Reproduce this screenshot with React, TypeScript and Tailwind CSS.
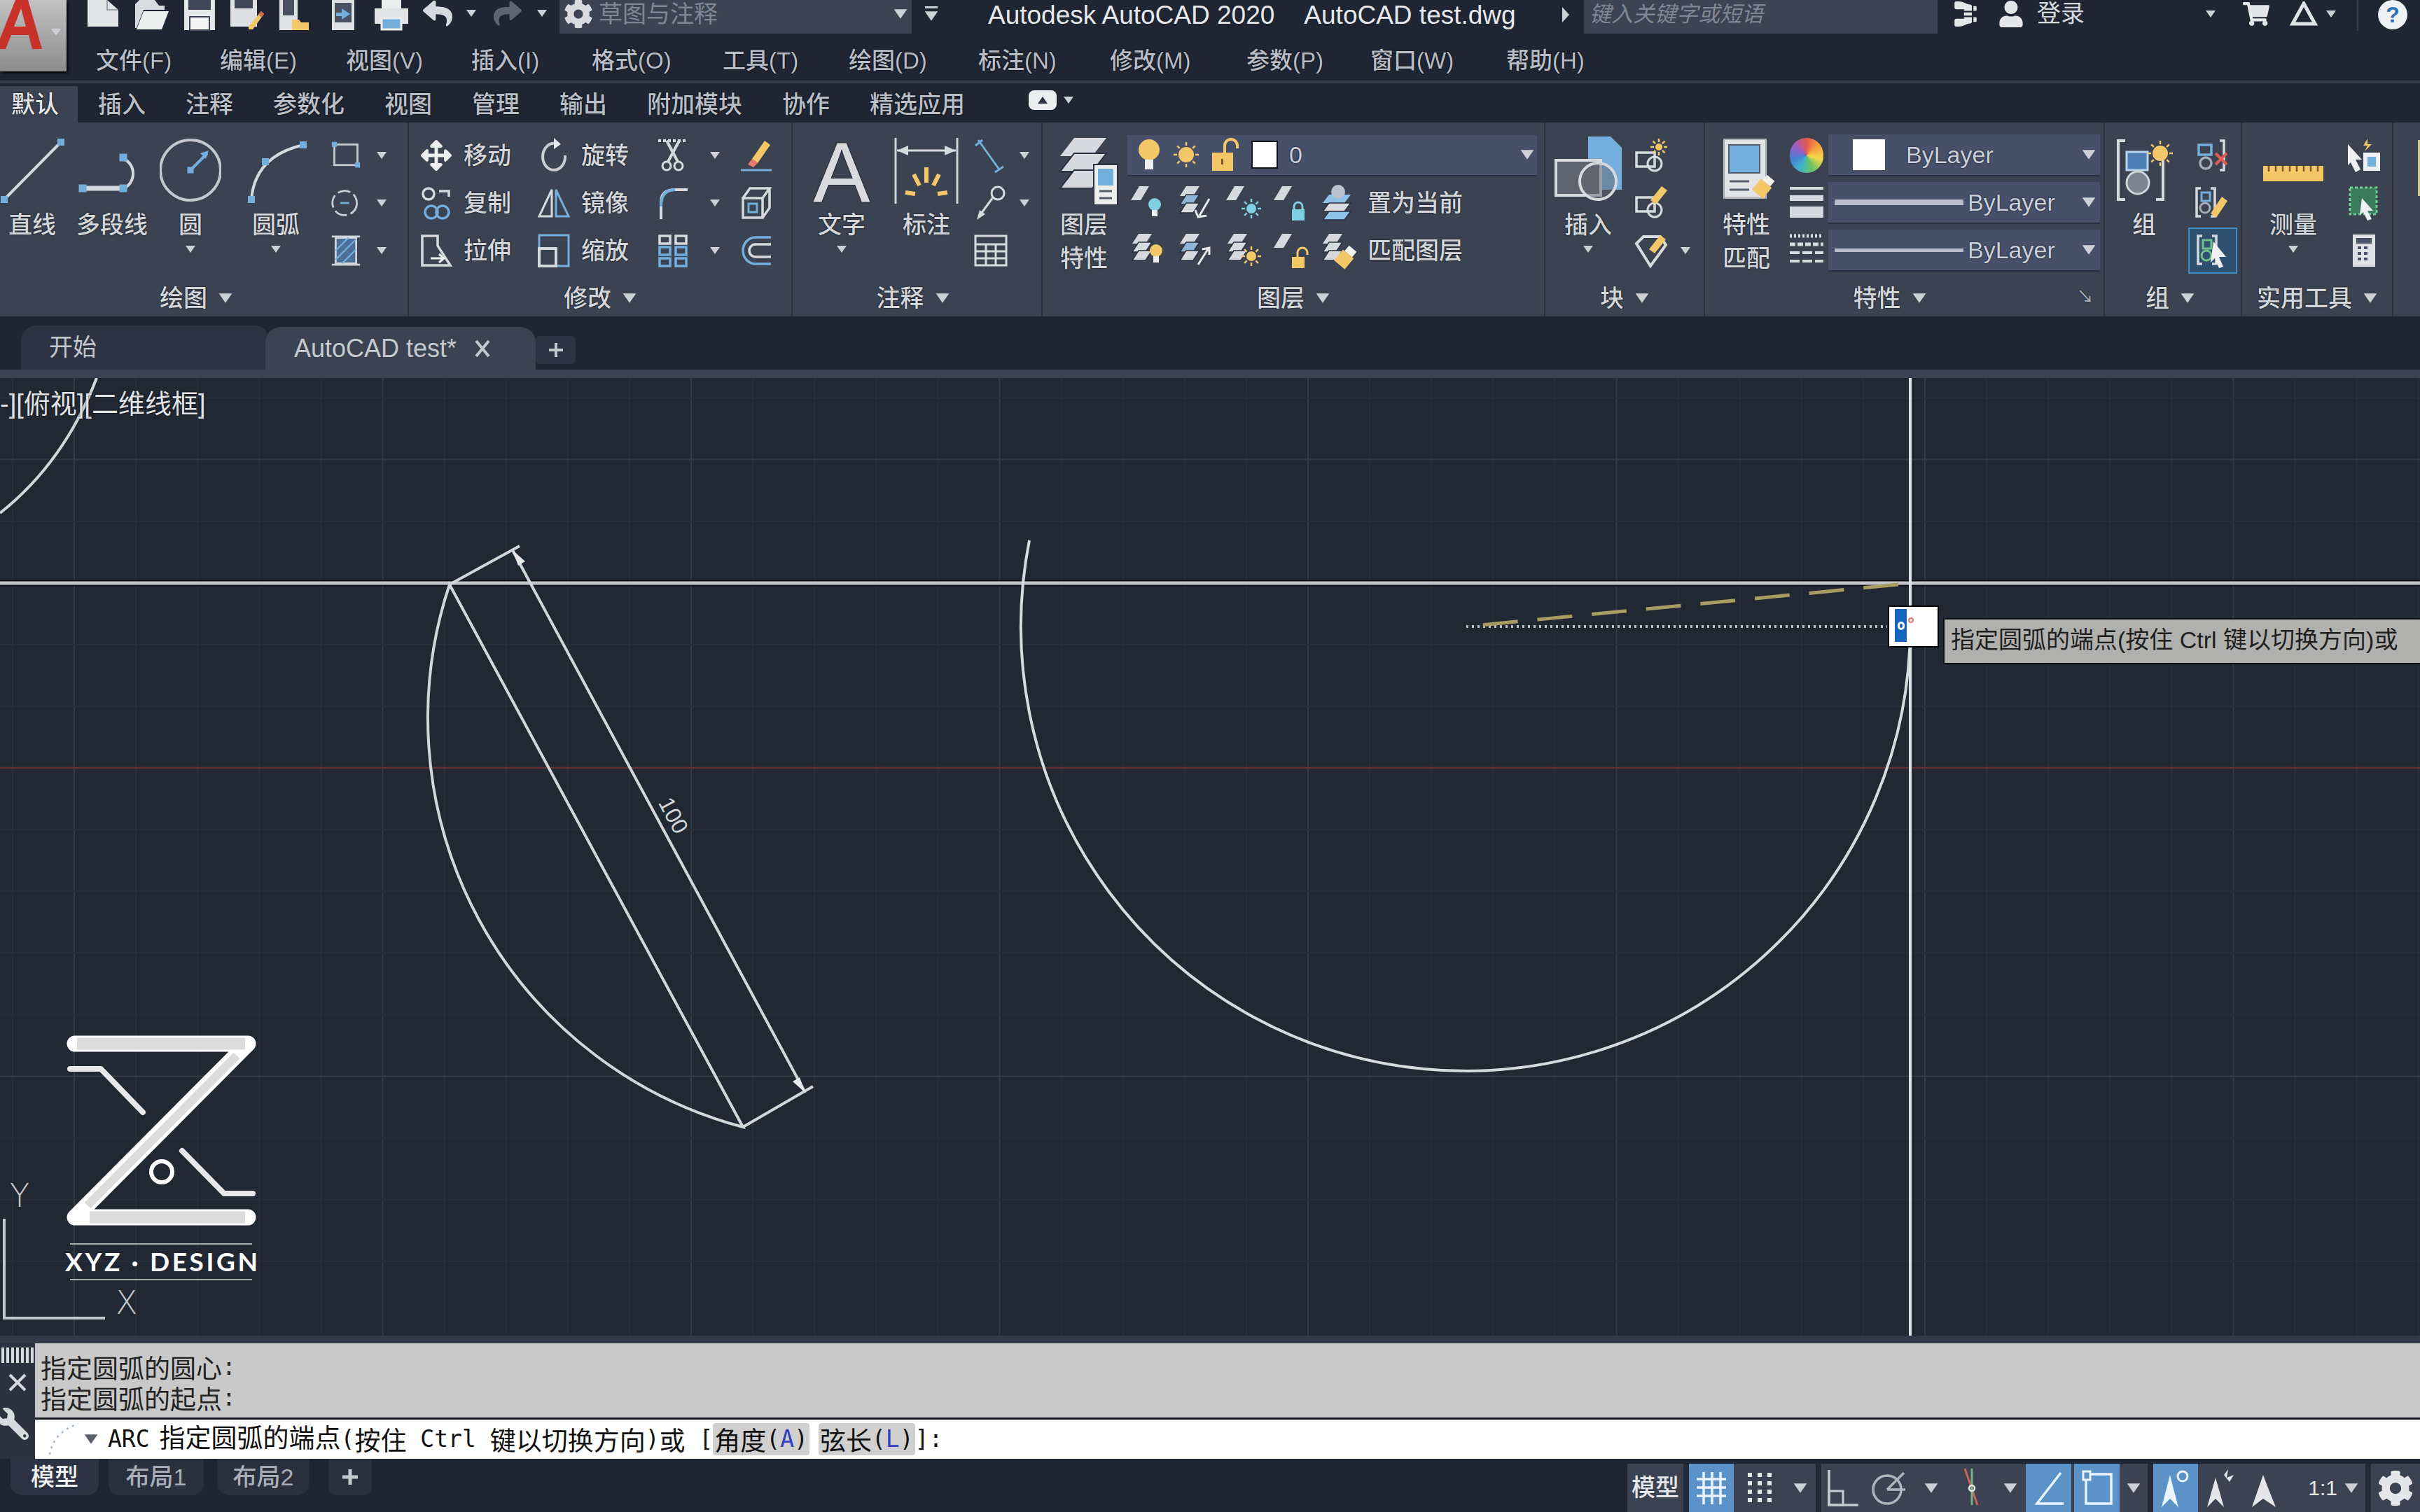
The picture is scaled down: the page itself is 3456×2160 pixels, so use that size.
import type { ReactNode } from "react"
import { FaArrowsAlt, FaBinoculars, FaCog, FaReply, FaShare, FaShoppingCart, FaUser, FaWrench } from "react-icons/fa"

const LIGHT = "#d6d9de"
const BLUE = "#74aedc"
const YELLOW = "#f4c768"
const TEAL = "#7fd0e0"

function Svg({ w, h, children, className }: { w: number; h: number; children: ReactNode; className?: string }) {
  return (
    <svg width={w} height={h} viewBox={`0 0 ${w} ${h}`} fill="none" className={className}>
      {children}
    </svg>
  )
}

function Caret({ big, className, fill = "#cdd1d7" }: { big?: boolean; className?: string; fill?: string }) {
  const w = big ? 20 : 14
  const h = big ? 16 : 12
  return (
    <svg width={w} height={h} viewBox="0 0 14 12" className={className}>
      <polygon points="0,1 14,1 7,11" fill={fill} />
    </svg>
  )
}

const Node = ({ x, y, s = 8 }: { x: number; y: number; s?: number }) => (
  <rect x={x - s / 2} y={y - s / 2} width={s} height={s} fill={BLUE} />
)

const Plane = ({ x = 0, y = 0, fill = LIGHT }: { x?: number; y?: number; fill?: string }) => (
  <polygon points={`${x + 2},${y + 24} ${x + 14},${y + 4} ${x + 28},${y + 4} ${x + 16},${y + 24}`} fill={fill} />
)

const Stack = ({ mid = LIGHT }: { mid?: string }) => (
  <>
    <polygon points="4,18 13,4 32,4 23,18" fill={LIGHT} />
    <polygon points="4,30 13,16 32,16 23,30" fill={mid} stroke="#2b3140" strokeWidth="1.5" />
    <polygon points="4,42 13,28 32,28 23,42" fill={LIGHT} stroke="#2b3140" strokeWidth="1.5" />
  </>
)

const Bulb = ({ c, x = 36, y = 30 }: { c: string; x?: number; y?: number }) => (
  <>
    <circle cx={x} cy={y} r="9" fill={c} />
    <rect x={x - 4} y={y + 8} width="8" height="9" fill="#eceef0" />
  </>
)

const Padlock = ({ c, open, x = 28, y = 28 }: { c: string; open?: boolean; x?: number; y?: number }) => (
  <>
    <path
      d={open ? `M${x + 8} ${y + 10} v-7 a7 7 0 0 1 14 0 v3` : `M${x + 3} ${y + 10} v-5 a6 6 0 0 1 12 0 v5`}
      stroke={c}
      strokeWidth="3"
    />
    <rect x={x} y={y + 9} width="18" height="16" fill={c} />
  </>
)

const Sun = ({ x, y, r = 8, c = YELLOW }: { x: number; y: number; r?: number; c?: string }) => (
  <>
    {[0, 45, 90, 135, 180, 225, 270, 315].map((a) => (
      <line
        key={a}
        x1={x}
        y1={y - r - 2}
        x2={x}
        y2={y - r - 7}
        stroke={c}
        strokeWidth="2.5"
        transform={`rotate(${a} ${x} ${y})`}
      />
    ))}
    <circle cx={x} cy={y} r={r} fill={c} />
  </>
)

const Brush = ({ x, y }: { x: number; y: number }) => (
  <g transform={`translate(${x} ${y}) rotate(40)`}>
    <rect x="-7" y="-14" width="14" height="10" fill="#f2f2ee" />
    <rect x="-10" y="-4" width="20" height="20" fill={YELLOW} />
  </g>
)

function Panel({
  className,
  title,
  footClass,
  corner,
  children,
}: {
  className: string
  title: string
  footClass?: string
  corner?: boolean
  children: ReactNode
}) {
  return (
    <div className={`flex flex-col border-r-2 border-[#2a303d] ${className}`}>
      <div className="flex h-[223px] pt-[13px]">{children}</div>
      <div className={`relative flex h-[54px] items-center justify-center gap-[16px] pt-[2px] text-[34px] text-[#d3d6db] ${footClass ?? ""}`}>
        <span className="leading-none">{title}</span>
        <Caret big />
        {corner && <span className="absolute right-[14px] top-[14px] text-[24px] leading-none text-[#aab0ba]">↘</span>}
      </div>
    </div>
  )
}

function Tool({
  icon,
  label,
  label2,
  caret,
  className,
}: {
  icon: ReactNode
  label: string
  label2?: string
  caret?: boolean
  className: string
}) {
  return (
    <div className={`flex flex-col items-center ${className}`}>
      <div className="flex h-[110px] w-full items-center justify-center">{icon}</div>
      <div className="h-[46px] text-[34px] leading-[46px] text-[#d3d6db]">{label}</div>
      {label2 && <div className="mt-[2px] text-[34px] leading-[46px] text-[#d3d6db]">{label2}</div>}
      {caret && <Caret className="mt-[6px]" />}
    </div>
  )
}

function Row({ children, className }: { children: ReactNode; className?: string }) {
  return <div className={`flex h-[68px] items-center ${className ?? ""}`}>{children}</div>
}

function Slot({ children, className }: { children?: ReactNode; className: string }) {
  return <div className={`flex shrink-0 items-center justify-center ${className}`}>{children}</div>
}

const menus = [
  { label: "文件(F)", w: "w-[177px]" },
  { label: "编辑(E)", w: "w-[180px]" },
  { label: "视图(V)", w: "w-[179px]" },
  { label: "插入(I)", w: "w-[172px]" },
  { label: "格式(O)", w: "w-[187px]" },
  { label: "工具(T)", w: "w-[180px]" },
  { label: "绘图(D)", w: "w-[185px]" },
  { label: "标注(N)", w: "w-[188px]" },
  { label: "修改(M)", w: "w-[195px]" },
  { label: "参数(P)", w: "w-[177px]" },
  { label: "窗口(W)", w: "w-[194px]" },
  { label: "帮助(H)", w: "w-[120px]" },
]
const ribbonTabs = ["插入", "注释", "参数化", "视图", "管理", "输出", "附加模块", "协作", "精选应用"]

function TitleBar() {
  return (
    <div className="flex h-[70px] items-start">
      <div className="w-[17px]" />
      <Slot className="h-[44px] w-[69px]">
        <Svg w={48} h={44}>
          <path d="M2 0 H30 L46 14 V38 H2 Z" fill="#e4e5e7" />
          <path d="M30 0 V14 H46" stroke="#9aa0aa" strokeWidth="2" />
        </Svg>
      </Slot>
      <Slot className="h-[44px] w-[69px]">
        <Svg w={50} h={44}>
          <path d="M8 0 H30 L36 8 H44 V14 H14 L4 40 H2 V6 Z" fill="#d9dbde" />
          <path d="M14 16 H50 L40 42 H4 Z" fill="#eceded" />
        </Svg>
      </Slot>
      <Slot className="h-[44px] w-[69px]">
        <Svg w={48} h={44}>
          <rect x="2" y="0" width="44" height="43" fill="#e6e7e9" />
          <rect x="8" y="0" width="32" height="14" fill="#3f4657" />
          <rect x="10" y="24" width="28" height="19" fill="#f5f5f5" stroke="#3f4657" strokeWidth="2" />
        </Svg>
      </Slot>
      <Slot className="h-[44px] w-[66px]">
        <Svg w={50} h={44}>
          <rect x="2" y="0" width="38" height="38" fill="#dfe0e3" />
          <rect x="8" y="0" width="26" height="12" fill="#3f4657" />
          <path d="M28 38 L46 16 L50 20 L34 42 H28 Z" fill={YELLOW} />
          <path d="M42 20 L46 16 L50 20 L46 25 Z" fill="#d86b50" />
        </Svg>
      </Slot>
      <Slot className="h-[44px] w-[70px]">
        <Svg w={46} h={44}>
          <rect x="2" y="0" width="26" height="43" fill="#dfe1e4" />
          <rect x="7" y="0" width="16" height="22" fill="#4a5162" />
          <path d="M20 28 H30 L33 32 H44 V43 H20 Z" fill={YELLOW} />
        </Svg>
      </Slot>
      <Slot className="h-[44px] w-[70px]">
        <Svg w={36} h={44}>
          <rect x="2" y="0" width="32" height="43" fill="#dfe1e4" />
          <rect x="6" y="4" width="24" height="28" fill="#4a5162" />
          <path d="M8 18 H16 V12 L28 20 L16 28 V23 H8 Z" fill={BLUE} />
        </Svg>
      </Slot>
      <Slot className="h-[44px] w-[67px]">
        <Svg w={52} h={44}>
          <rect x="12" y="0" width="28" height="12" fill="#eceded" />
          <rect x="2" y="12" width="48" height="22" fill="#e2e3e5" />
          <rect x="12" y="26" width="28" height="16" fill={BLUE} stroke="#eceded" strokeWidth="3" />
        </Svg>
      </Slot>
      <Slot className="h-[38px] w-[66px]">
        <FaReply size={42} color="#d6d9de" />
      </Slot>
      <Slot className="h-[38px] w-[30px]">
        <Caret />
      </Slot>
      <Slot className="h-[38px] w-[74px]">
        <FaShare size={40} color="#5d6472" />
      </Slot>
      <Slot className="h-[38px] w-[24px]">
        <Caret />
      </Slot>
      <div className="w-[13px]" />
      <div className="flex h-[48px] w-[503px] items-center bg-[#3c4353] pb-[8px] pl-[6px]">
        <FaCog size={42} color="#d8dade" />
        <span className="ml-[8px] text-[34px] leading-none text-[#7f8795]">草图与注释</span>
        <Caret big className="ml-auto mr-[6px]" />
      </div>
      <Slot className="h-[40px] w-[55px]">
        <div className="flex flex-col items-center gap-[3px]">
          <div className="h-[3px] w-[18px] bg-[#cdd1d7]" />
          <Caret big />
        </div>
      </Slot>
      <div className="flex h-[42px] w-[905px] items-center pl-[54px] text-[37px] leading-none text-[#e6e8eb]">
        <span>Autodesk AutoCAD 2020</span>
        <span className="ml-[42px]">AutoCAD test.dwg</span>
        <svg width="12" height="22" viewBox="0 0 12 22" className="ml-auto mr-[20px]">
          <polygon points="1,0 11,11 1,22" fill="#cdd1d7" />
        </svg>
      </div>
      <div className="flex h-[48px] w-[505px] items-center bg-[#3c4353] pb-[8px] pl-[8px]">
        <span className="text-[31px] italic leading-none text-[#7f8795]">键入关键字或短语</span>
      </div>
      <Slot className="ml-[22px] h-[40px] w-[36px]">
        <FaBinoculars size={38} color="#e4e6e9" className="rotate-90" />
      </Slot>
      <Slot className="ml-[25px] h-[40px] w-[44px]">
        <FaUser size={38} color="#e4e6e9" />
      </Slot>
      <span className="ml-[15px] text-[34px] leading-[38px] text-[#d6d9de]">登录</span>
      <Slot className="ml-[173px] h-[40px] w-[14px]">
        <Caret />
      </Slot>
      <Slot className="ml-[36px] h-[40px] w-[44px]">
        <FaShoppingCart size={38} color="#e4e6e9" />
      </Slot>
      <Slot className="ml-[24px] h-[40px] w-[44px]">
        <Svg w={44} h={36}>
          <path d="M22 3 L38 32 H6 Z" stroke="#dfe2e6" strokeWidth="5" />
        </Svg>
      </Slot>
      <Slot className="ml-[10px] h-[40px] w-[14px]">
        <Caret />
      </Slot>
      <div className="ml-[30px] h-[44px] w-[2px] bg-[#3c4353]" />
      <div className="ml-[28px] flex h-[42px] w-[42px] items-center justify-center rounded-full bg-[#eef0f3] text-[32px] font-bold leading-none text-[#2f6fb5]">
        ?
      </div>
    </div>
  )
}

function RibbonTabs() {
  return (
    <div className="flex h-[60px] items-end border-t-4 border-[#333948] text-[34px] font-medium text-[#b9bec8] [text-shadow:0_0_2px_#000]">
      <div className="flex h-[52px] w-[111px] items-center bg-[#3b4252] pl-[16px] text-[#e4e6ea]">默认</div>
      <div className="ml-[29px] flex h-[52px] items-center gap-[57px]">
        {ribbonTabs.map((t) => (
          <span key={t}>{t}</span>
        ))}
      </div>
      <div className="ml-[91px] flex h-[60px] items-center gap-[10px] pb-[4px]">
        <div className="flex h-[28px] w-[40px] items-center justify-center rounded-[8px] bg-[#eceef0]">
          <svg width="14" height="10" viewBox="0 0 14 10">
            <polygon points="7,0 14,10 0,10" fill="#2b3140" />
          </svg>
        </div>
        <Caret />
      </div>
    </div>
  )
}

function DrawPanel() {
  const rows = [
    <Svg w={48} h={44} key="r">
      <rect x="6" y="5" width="36" height="32" stroke="#c9cdd3" strokeWidth="3" />
      <Node x={6} y={5} />
      <Node x={42} y={37} />
    </Svg>,
    <Svg w={48} h={44} key="e">
      <ellipse cx="22" cy="22" rx="19" ry="19" stroke="#c9cdd3" strokeWidth="3" strokeDasharray="20 6" />
      <line x1="15" y1="22" x2="29" y2="22" stroke={BLUE} strokeWidth="3" />
    </Svg>,
    <Svg w={48} h={52} key="h">
      <rect x="8" y="6" width="32" height="40" fill="#4b6f96" stroke="#d0d3d8" strokeWidth="3" />
      <path d="M8 26 L28 6 M8 40 L40 8 M18 46 L40 24" stroke={BLUE} strokeWidth="2.5" />
      <path d="M2 4 H46 M2 48 H46" stroke="#d0d3d8" strokeWidth="3" />
    </Svg>,
  ]
  return (
    <Panel className="w-[584px]" title="绘图" footClass="pr-[22px]">
      <Tool
        className="w-[92px]"
        label="直线"
        icon={
          <Svg w={92} h={100}>
            <line x1="6" y1="92" x2="87" y2="10" stroke={LIGHT} strokeWidth="4" />
            <Node x={6} y={92} s={10} />
            <Node x={87} y={10} s={10} />
          </Svg>
        }
      />
      <Tool
        className="w-[136px]"
        label="多段线"
        icon={
          <Svg w={136} h={100}>
            <path d="M84 76 A20 22 0 0 0 84 34" stroke={LIGHT} strokeWidth="4" />
            <line x1="26" y1="76" x2="84" y2="76" stroke={LIGHT} strokeWidth="7" />
            <Node x={26} y={76} s={11} />
            <Node x={84} y={76} s={11} />
            <Node x={84} y={32} s={11} />
          </Svg>
        }
      />
      <Tool
        className="w-[88px]"
        label="圆"
        caret
        icon={
          <Svg w={88} h={100}>
            <circle cx="44" cy="50" r="43" stroke="#c4c8ce" strokeWidth="4" />
            <line x1="44" y1="50" x2="68" y2="26" stroke={BLUE} strokeWidth="4" />
            <Node x={44} y={50} s={9} />
            <polygon points="70,22 58,26 66,34" fill={BLUE} />
          </Svg>
        }
      />
      <Tool
        className="w-[156px]"
        label="圆弧"
        caret
        icon={
          <Svg w={156} h={100}>
            <path d="M43 92 Q48 30 117 14" stroke={LIGHT} strokeWidth="4" />
            <Node x={43} y={92} s={10} />
            <Node x={63} y={38} s={10} />
            <Node x={117} y={14} s={10} />
          </Svg>
        }
      />
      <div>
        {rows.map((r) => (
          <Row key={r.key}>
            <Slot className="w-[44px]">{r}</Slot>
            <Slot className="w-[58px]">
              <Caret />
            </Slot>
          </Row>
        ))}
      </div>
    </Panel>
  )
}

function ModifyPanel() {
  const rows: ReactNode[][] = [
    [
      <FaArrowsAlt size={44} color="#eceef0" key="a" />,
      "移动",
      <Svg w={44} h={50} key="b">
        <path d="M38 25 A16 19 0 1 1 24 8" stroke="#c9cdd3" strokeWidth="4" />
        <polygon points="22,0 32,9 22,16" fill="#e6e8eb" />
      </Svg>,
      "旋转",
      <Svg w={46} h={50} key="c">
        <path d="M2 4 H44" stroke={LIGHT} strokeWidth="4" strokeDasharray="4 3" />
        <path d="M14 4 L30 34 M32 4 L16 34" stroke={LIGHT} strokeWidth="4" />
        <circle cx="14" cy="40" r="6" stroke={LIGHT} strokeWidth="3" />
        <circle cx="31" cy="40" r="6" stroke={LIGHT} strokeWidth="3" />
      </Svg>,
      true,
      <Svg w={48} h={50} key="d">
        <path d="M18 30 L36 4 L44 10 L26 36 Z" fill={YELLOW} />
        <path d="M18 30 L26 36 L20 42 L12 38 Z" fill="#e77a6b" />
        <line x1="2" y1="46" x2="46" y2="46" stroke={BLUE} strokeWidth="3" />
      </Svg>,
    ],
    [
      <Svg w={48} h={50} key="a">
        <circle cx="13" cy="12" r="8" stroke={LIGHT} strokeWidth="3.5" />
        <path d="M28 8 H42 V16" stroke={LIGHT} strokeWidth="3.5" />
        <circle cx="17" cy="38" r="9" stroke={BLUE} strokeWidth="3.5" />
        <circle cx="33" cy="38" r="9" stroke={BLUE} strokeWidth="3.5" />
      </Svg>,
      "复制",
      <Svg w={46} h={50} key="b">
        <path d="M20 6 V44 H2 Z" stroke={LIGHT} strokeWidth="3" />
        <path d="M26 6 V44 H44 Z" stroke={BLUE} strokeWidth="3" />
      </Svg>,
      "镜像",
      <Svg w={46} h={50} key="c">
        <path d="M6 48 V24 Q6 6 26 6 H44" stroke={LIGHT} strokeWidth="4" />
        <path d="M6 30 Q6 6 26 6" stroke={BLUE} strokeWidth="4" />
      </Svg>,
      true,
      <Svg w={46} h={50} key="d">
        <path d="M4 18 H32 V46 H4 Z M4 18 L14 4 H42 L32 18 M42 4 V32 L32 46" stroke={LIGHT} strokeWidth="3.5" />
        <rect x="12" y="26" width="12" height="12" stroke={BLUE} strokeWidth="3" />
      </Svg>,
    ],
    [
      <Svg w={48} h={50} key="a">
        <path d="M4 4 H26 V18 L44 46 H4 Z" stroke={LIGHT} strokeWidth="3.5" />
        <path d="M16 36 H34 M28 30 L35 36 L28 42" stroke="#f0f1f3" strokeWidth="3" />
      </Svg>,
      "拉伸",
      <Svg w={48} h={50} key="b">
        <rect x="3" y="3" width="42" height="44" stroke={BLUE} strokeWidth="3" />
        <rect x="3" y="22" width="24" height="25" stroke={LIGHT} strokeWidth="4" />
      </Svg>,
      "缩放",
      <Svg w={46} h={50} key="c">
        {[4, 27].map((x) =>
          [4, 20, 36].map((y) => (
            <rect key={`${x}-${y}`} x={x} y={y} width="15" height="11" stroke={y === 4 ? LIGHT : BLUE} strokeWidth="3.5" />
          )),
        )}
      </Svg>,
      true,
      <Svg w={46} h={50} key="d">
        <path d="M44 6 H22 A18 19 0 0 0 22 44 H44" stroke={BLUE} strokeWidth="3.5" />
        <path d="M44 16 H22 A9 9 0 0 0 22 34 H44" stroke={LIGHT} strokeWidth="3.5" />
      </Svg>,
    ],
  ]
  return (
    <Panel className="w-[548px]" title="修改">
      <div className="pl-[15px]">
        {rows.map((r, i) => (
          <Row key={i}>
            <Slot className="w-[48px]">{r[0]}</Slot>
            <div className="w-[120px] pl-[15px] text-[34px] text-[#d3d6db]">{r[1]}</div>
            <Slot className="w-[48px]">{r[2]}</Slot>
            <div className="w-[122px] pl-[15px] text-[34px] text-[#d3d6db]">{r[3]}</div>
            <Slot className="w-[48px]">{r[4]}</Slot>
            <Slot className="w-[71px]">
              <Caret />
            </Slot>
            <Slot className="w-[48px]">{r[6]}</Slot>
          </Row>
        ))}
      </div>
    </Panel>
  )
}

function AnnotatePanel() {
  return (
    <Panel className="w-[357px]" title="注释" footClass="pr-[12px]">
      <Tool
        className="w-[140px]"
        label="文字"
        caret
        icon={
          <Svg w={84} h={100}>
            <text x="42" y="96" textAnchor="middle" fontSize="122" fill="#d8dadd" fontFamily="'Liberation Sans', sans-serif">
              A
            </text>
          </Svg>
        }
      />
      <Tool
        className="w-[102px]"
        label="标注"
        icon={
          <Svg w={100} h={100}>
            <path d="M6 4 V98 M94 4 V98" stroke="#d0d3d8" strokeWidth="3" />
            <path d="M8 22 H92" stroke="#d6d9de" strokeWidth="3" />
            <polygon points="8,22 24,15 24,29" fill="#d6d9de" />
            <polygon points="92,22 76,15 76,29" fill="#d6d9de" />
            <path d="M50 46 V68 M32 56 L40 72 M68 56 L60 72 M20 82 L34 84 M80 82 L66 84" stroke={YELLOW} strokeWidth="6" />
          </Svg>
        }
      />
      <div>
        <Row>
          <Slot className="w-[82px]">
            <Svg w={48} h={52}>
              <path d="M6 4 L36 46 M2 12 L12 4 M30 50 L42 42" stroke={BLUE} strokeWidth="3" />
            </Svg>
          </Slot>
          <Slot className="w-[14px]">
            <Caret />
          </Slot>
        </Row>
        <Row>
          <Slot className="w-[82px]">
            <Svg w={48} h={52}>
              <circle cx="34" cy="12" r="9" stroke={LIGHT} strokeWidth="3" />
              <path d="M27 18 L8 44" stroke={LIGHT} strokeWidth="3" />
              <polygon points="4,50 8,36 16,42" fill={LIGHT} />
            </Svg>
          </Slot>
          <Slot className="w-[14px]">
            <Caret />
          </Slot>
        </Row>
        <Row>
          <Slot className="w-[82px]">
            <Svg w={48} h={46}>
              <rect x="2" y="2" width="44" height="42" stroke={LIGHT} strokeWidth="3" />
              <path d="M2 14 H46 M2 24 H46 M2 34 H46 M17 14 V44 M31 14 V44" stroke={LIGHT} strokeWidth="3" />
            </Svg>
          </Slot>
        </Row>
      </div>
    </Panel>
  )
}

function LayerPanel() {
  const row1 = [
    <Svg w={56} h={56} key="1">
      <Plane />
      <Bulb c={TEAL} />
    </Svg>,
    <Svg w={56} h={56} key="2">
      <Stack mid="#8fb4d8" />
      <path d="M46 22 L32 46 M26 38 L30 48 L42 46" stroke="#e6e8eb" strokeWidth="3" />
    </Svg>,
    <Svg w={56} h={56} key="3">
      <Plane />
      <Sun x={38} y={36} c={TEAL} r={7} />
    </Svg>,
    <Svg w={56} h={56} key="4">
      <Plane />
      <Padlock c={TEAL} />
    </Svg>,
    <Svg w={56} h={56} key="5">
      <polygon points="4,28 13,16 44,16 35,28" fill="#8fc2e8" />
      <polygon points="4,40 13,28 44,28 35,40" fill="#d9dbde" stroke="#2b3140" strokeWidth="1.5" />
      <polygon points="4,52 13,40 44,40 35,52" fill="#8fc2e8" stroke="#2b3140" strokeWidth="1.5" />
      <circle cx="26" cy="12" r="10" fill="#b9c3d0" />
    </Svg>,
  ]
  const row2 = [
    <Svg w={56} h={56} key="1">
      <Stack />
      <Bulb c={YELLOW} x={38} y={28} />
    </Svg>,
    <Svg w={56} h={56} key="2">
      <Stack mid="#8fb4d8" />
      <path d="M30 48 L44 26 M36 26 L46 24 L46 34" stroke="#e6e8eb" strokeWidth="3" />
    </Svg>,
    <Svg w={56} h={56} key="3">
      <Stack />
      <Sun x={38} y={36} r={7} />
    </Svg>,
    <Svg w={56} h={56} key="4">
      <Plane />
      <Padlock c={YELLOW} open />
    </Svg>,
    <Svg w={56} h={56} key="5">
      <Stack />
      <Brush x={38} y={36} />
    </Svg>,
  ]
  return (
    <Panel className="w-[718px]" title="图层">
      <Tool
        className="w-[118px]"
        label="图层"
        label2="特性"
        icon={
          <Svg w={100} h={100}>
            <polygon points="16,30 36,4 82,4 62,30" fill={LIGHT} />
            <polygon points="16,52 36,26 82,26 62,52" fill={LIGHT} stroke="#2b3140" strokeWidth="2" />
            <polygon points="16,76 36,50 82,50 62,76" fill={LIGHT} stroke="#2b3140" strokeWidth="2" />
            <rect x="64" y="42" width="34" height="58" fill="#eceded" stroke="#2b3140" strokeWidth="2" />
            <rect x="70" y="48" width="22" height="24" fill={BLUE} />
            <path d="M72 80 H90 M72 90 H90" stroke="#555c6a" strokeWidth="3" />
          </Svg>
        }
      />
      <div className="ml-[3px] w-[585px]">
        <Row>
          <div className="flex h-[59px] w-full items-center border-b-2 border-[#2a303d] bg-[#465068] pl-[14px]">
            <Svg w={42} h={54}>
              <circle cx="17" cy="20" r="15" fill={YELLOW} />
              <rect x="11" y="34" width="12" height="14" fill="#eceef0" />
            </Svg>
            <Svg w={54} h={54} className="ml-[1px]">
              <Sun x={27} y={27} r={11} />
            </Svg>
            <Svg w={40} h={54} className="ml-[8px]">
              <path d="M20 24 V14 a9 9 0 0 1 18 0 v4" stroke={YELLOW} strokeWidth="4" />
              <rect x="2" y="24" width="30" height="26" fill={YELLOW} />
              <rect x="15" y="33" width="3" height="8" fill="#7a5a20" />
            </Svg>
            <div className="ml-[18px] h-[40px] w-[38px] border-2 border-[#11151c] bg-white" />
            <span className="ml-[16px] text-[34px] leading-none text-[#c9d0dc]">0</span>
            <Caret big className="ml-auto mr-[4px]" />
          </div>
        </Row>
        <Row className="gap-[12px] pl-[3px]">
          {row1}
          <span className="text-[34px] text-[#d3d6db]">置为当前</span>
        </Row>
        <Row className="gap-[12px] pl-[3px]">
          {row2}
          <span className="text-[34px] text-[#d3d6db]">匹配图层</span>
        </Row>
      </div>
    </Panel>
  )
}

function BlockPanel() {
  return (
    <Panel className="w-[228px]" title="块">
      <Tool
        className="w-[122px]"
        label="插入"
        caret
        icon={
          <Svg w={100} h={100}>
            <path d="M50 2 H82 L98 18 V78 H50 Z" fill={BLUE} />
            <rect x="4" y="36" width="64" height="50" fill="#5f6470" stroke={LIGHT} strokeWidth="4" />
            <circle cx="64" cy="66" r="26" stroke={LIGHT} strokeWidth="4" fill="#5f6470" fillOpacity="0.5" />
          </Svg>
        }
      />
      <div>
        <Row>
          <Slot className="w-[58px]">
            <Svg w={50} h={52}>
              <rect x="4" y="22" width="26" height="20" stroke={LIGHT} strokeWidth="3.5" />
              <circle cx="30" cy="38" r="10" stroke={LIGHT} strokeWidth="3" />
              <Sun x={36} y={14} r={5} />
            </Svg>
          </Slot>
        </Row>
        <Row>
          <Slot className="w-[58px]">
            <Svg w={50} h={52}>
              <rect x="4" y="18" width="26" height="20" stroke={LIGHT} strokeWidth="3.5" />
              <circle cx="30" cy="36" r="10" stroke={LIGHT} strokeWidth="3" />
              <path d="M24 22 L40 2 L48 8 L32 28 Z" fill={YELLOW} />
            </Svg>
          </Slot>
        </Row>
        <Row>
          <Slot className="w-[58px]">
            <Svg w={50} h={52}>
              <path d="M4 16 L14 6 H38 L46 18 L24 48 Z" stroke={LIGHT} strokeWidth="4" />
              <path d="M22 24 L38 4 L46 10 L30 30 Z" fill={YELLOW} />
            </Svg>
          </Slot>
          <Slot className="w-[40px]">
            <Caret />
          </Slot>
        </Row>
      </div>
    </Panel>
  )
}

function ComboLine({ thick }: { thick: number }) {
  return (
    <div className="flex h-[60px] w-full items-center border-b-2 border-[#2a303d] bg-[#465068] pl-[9px]">
      <div className="w-[184px] bg-[#b9c0cb]" style={{ height: thick }} />
      <span className="ml-[6px] text-[34px] leading-none text-[#c9d0dc]">ByLayer</span>
      <Caret big className="ml-auto mr-[6px]" />
    </div>
  )
}

function PropertiesPanel() {
  return (
    <Panel className="w-[571px]" title="特性" footClass="pr-[42px]" corner>
      <Tool
        className="w-[118px]"
        label="特性"
        label2="匹配"
        icon={
          <Svg w={100} h={100}>
            <rect x="18" y="6" width="60" height="84" fill="#e2e3e5" stroke="#aeb2b9" strokeWidth="2" />
            <rect x="25" y="14" width="44" height="40" fill={BLUE} stroke="#555c6a" strokeWidth="2" />
            <path d="M26 66 H54 M26 78 H54" stroke="#555c6a" strokeWidth="3" />
            <Brush x={76} y={72} />
          </Svg>
        }
      />
      <div className="w-[54px]">
        <Row>
          <Slot className="w-full">
            <div className="h-[50px] w-[48px] rounded-full bg-[conic-gradient(#e7584e,#f5a23c,#f5d84c,#6cc15f,#3fb4c9,#4a7fd0,#9a5cc6,#e7584e)]" />
          </Slot>
        </Row>
        <Row>
          <Slot className="w-full">
            <Svg w={48} h={50}>
              <rect y="2" width="48" height="4" fill={LIGHT} />
              <rect y="14" width="48" height="8" fill={LIGHT} />
              <rect y="30" width="48" height="16" fill={LIGHT} />
            </Svg>
          </Slot>
        </Row>
        <Row>
          <Slot className="w-full">
            <Svg w={48} h={50}>
              <path d="M0 4 H48" stroke={LIGHT} strokeWidth="5" strokeDasharray="3 3" />
              <path d="M0 16 H48" stroke={LIGHT} strokeWidth="5" strokeDasharray="8 3" />
              <path d="M0 28 H48" stroke={LIGHT} strokeWidth="4" strokeDasharray="14 4" />
              <path d="M0 40 H48" stroke={LIGHT} strokeWidth="4" strokeDasharray="14 4" />
            </Svg>
          </Slot>
        </Row>
      </div>
      <div className="ml-[4px] w-[388px]">
        <Row>
          <div className="flex h-[60px] w-full items-center border-b-2 border-[#2a303d] bg-[#465068] pl-[35px]">
            <div className="h-[44px] w-[46px] bg-white" />
            <span className="ml-[30px] text-[34px] leading-none text-[#c9d0dc]">ByLayer</span>
            <Caret big className="ml-auto mr-[6px]" />
          </div>
        </Row>
        <Row>
          <ComboLine thick={8} />
        </Row>
        <Row>
          <ComboLine thick={5} />
        </Row>
      </div>
    </Panel>
  )
}

function GroupPanel() {
  return (
    <Panel className="w-[196px]" title="组" footClass="pr-[8px]">
      <Tool
        className="w-[112px]"
        label="组"
        icon={
          <Svg w={90} h={100}>
            <path d="M18 8 H8 V92 H18 M62 92 H72 V20" stroke={LIGHT} strokeWidth="4" />
            <rect x="20" y="24" width="30" height="26" fill="#4d7fb5" stroke="#b9d4ec" strokeWidth="3" />
            <circle cx="36" cy="68" r="16" fill="#7d8290" stroke="#d0d3d8" strokeWidth="3" />
            <Sun x={68} y={26} r={11} />
          </Svg>
        }
      />
      <div className="w-[80px]">
        <Row>
          <Slot className="w-full">
            <Svg w={48} h={50}>
              <path d="M36 4 H42 V46 H36" stroke={LIGHT} strokeWidth="3.5" />
              <rect x="6" y="10" width="18" height="14" stroke={BLUE} strokeWidth="3.5" />
              <circle cx="16" cy="36" r="8" stroke="#a7acb5" strokeWidth="3.5" />
              <path d="M30 22 L46 38 M46 22 L30 38" stroke="#e05f54" strokeWidth="4" />
            </Svg>
          </Slot>
        </Row>
        <Row>
          <Slot className="w-full">
            <Svg w={50} h={54}>
              <path d="M10 6 H4 V46 H10 M24 46 H30 V6 H24" stroke={LIGHT} strokeWidth="3.5" />
              <rect x="11" y="12" width="12" height="12" stroke={BLUE} strokeWidth="3" />
              <circle cx="16" cy="34" r="7" stroke="#a7acb5" strokeWidth="3" />
              <path d="M24 42 L40 18 L48 24 L32 48 Z" fill={YELLOW} />
            </Svg>
          </Slot>
        </Row>
        <Row>
          <Slot className="ml-[7px] h-[66px] w-[70px] border-2 border-[#3f8fc2] bg-[#2f506e]">
            <Svg w={50} h={54}>
              <path d="M10 6 H4 V46 H10 M24 46 H30 V6 H24" stroke={LIGHT} strokeWidth="3.5" />
              <rect x="11" y="12" width="12" height="12" stroke="#6fbf8a" strokeWidth="3" />
              <circle cx="16" cy="34" r="7" stroke="#6fbf8a" strokeWidth="3" />
              <path d="M26 14 L44 36 L34 36 L40 50 L34 52 L28 38 L22 44 Z" fill="#eef0f3" />
            </Svg>
          </Slot>
        </Row>
      </div>
    </Panel>
  )
}

function UtilityPanel() {
  return (
    <Panel className="w-[216px]" title="实用工具">
      <Tool
        className="w-[146px]"
        label="测量"
        caret
        icon={
          <Svg w={90} h={100}>
            <rect x="2" y="44" width="86" height="22" fill={YELLOW} />
            <path d="M10 44 V52 M20 44 V52 M30 44 V52 M40 44 V52 M50 44 V52 M60 44 V52 M70 44 V52 M80 44 V52" stroke="#7a5a20" strokeWidth="2.5" />
          </Svg>
        }
      />
      <div className="w-[56px]">
        <Row>
          <Slot className="w-full">
            <Svg w={50} h={52}>
              <path d="M2 10 L22 32 L13 32 L20 46 L13 50 L6 36 L2 40 Z" fill="#eef0f3" />
              <rect x="24" y="22" width="24" height="26" fill="#eef0f3" />
              <rect x="30" y="28" width="12" height="14" fill={BLUE} />
              <path d="M30 2 L24 12 H30 L26 20 L36 10 H30 Z" fill={YELLOW} />
            </Svg>
          </Slot>
        </Row>
        <Row>
          <Slot className="w-full">
            <Svg w={46} h={50}>
              <rect x="3" y="3" width="38" height="38" fill="#3c7a5e" stroke="#6fd08f" strokeWidth="3" strokeDasharray="4 3" />
              <path d="M20 18 L36 36 L28 36 L34 48 L28 50 L22 38 L17 42 Z" fill="#eef0f3" />
            </Svg>
          </Slot>
        </Row>
        <Row>
          <Slot className="w-full">
            <Svg w={36} h={50}>
              <rect x="2" y="2" width="32" height="46" fill="#dfe1e4" />
              <rect x="7" y="7" width="22" height="8" fill="#4a5162" />
              <path d="M9 21 H27 M9 29 H27 M9 37 H27" stroke="#4a5162" strokeWidth="4" strokeDasharray="5 4" />
            </Svg>
          </Slot>
        </Row>
      </div>
    </Panel>
  )
}

function Ribbon() {
  return (
    <div className="flex h-[277px] bg-[#3b4252] font-medium [text-shadow:0_0_2px_#000]">
      <DrawPanel />
      <ModifyPanel />
      <AnnotatePanel />
      <LayerPanel />
      <BlockPanel />
      <PropertiesPanel />
      <GroupPanel />
      <UtilityPanel />
      <div className="flex flex-1 justify-end pt-[25px]">
        <div className="h-[80px] w-[3px] bg-[#d8c28a]" />
      </div>
    </div>
  )
}

function DocTabs() {
  return (
    <div className="flex h-[76px] items-end pl-[30px] text-[#c4c8cf]">
      <div className="flex h-[63px] w-[355px] items-center rounded-t-[22px] bg-[#2d3342] pl-[40px] text-[34px]">开始</div>
      <div className="-ml-[6px] flex h-[61px] w-[386px] items-center rounded-t-[22px] bg-[#3b4252] pl-[41px] text-[36px]">
        <span className="leading-none">AutoCAD test*</span>
        <Svg w={24} h={26} className="ml-[25px]">
          <path d="M3 2 L21 24 M21 2 L3 24" stroke="#c4c8cf" strokeWidth="4" />
        </Svg>
      </div>
      <div className="mb-[8px] flex h-[40px] w-[57px] items-center justify-center rounded-[6px] bg-[#2d3342]">
        <Svg w={24} h={24}>
          <path d="M12 2 V22 M2 12 H22" stroke="#c4c8cf" strokeWidth="4" />
        </Svg>
      </div>
    </div>
  )
}

function Logo() {
  return (
    <g>
      <path d="M107 1491 H354 L107 1739 H354" stroke="#ffffff" strokeWidth="23" strokeLinecap="round" strokeLinejoin="round" />
      <path d="M110 1491 H350" stroke="#dcdcdc" strokeWidth="17" />
      <path d="M338 1508 L125 1722" stroke="#dcdcdc" strokeWidth="12" />
      <path d="M128 1739 H350" stroke="#dcdcdc" strokeWidth="17" />
      <path d="M100 1527 H144 L204 1589" stroke="#e8e8e8" strokeWidth="8" strokeLinecap="round" strokeLinejoin="round" />
      <path d="M260 1644 L320 1705 H361" stroke="#e8e8e8" strokeWidth="8" strokeLinecap="round" strokeLinejoin="round" />
      <ellipse cx="231" cy="1674" rx="15" ry="15" stroke="#ffffff" strokeWidth="6" />
      <path d="M100 1777 H360 M100 1828 H360" stroke="#d6d6d6" strokeWidth="1.5" />
      <text x="93" y="1816" fill="#ffffff" fontSize="37" fontWeight="700" letterSpacing="3.6" fontFamily="Lato, 'Liberation Sans', sans-serif">
        XYZ · DESIGN
      </text>
    </g>
  )
}

function Canvas() {
  const xs = Array.from({ length: 40 }, (_, i) => 106 - 88.1 + i * 88.1)
  const ys = Array.from({ length: 16 }, (_, i) => 1097 - 88.1 * 7 + i * 88.1)
  return (
    <div className="relative h-[1368px] overflow-hidden bg-[#212733]">
      <svg width="3456" height="1368" viewBox="0 540 3456 1368" fill="none" className="absolute inset-0">
        {xs.map((x, i) => (
          <line key={x} x1={x} y1="540" x2={x} y2="1908" stroke={(i - 1) % 5 === 0 ? "#343a47" : "#282e3a"} strokeWidth="2" />
        ))}
        {ys.map((y, i) => (
          <line key={y} x1="0" y1={y} x2="3456" y2={y} stroke={(i - 2) % 5 === 0 ? "#343a47" : "#282e3a"} strokeWidth="2" />
        ))}
        <line x1="0" y1="1097" x2="3456" y2="1097" stroke="#5d3136" strokeWidth="2.5" />

        <path d="M138 540 Q92 660 0 733" stroke="#d2d5d9" strokeWidth="4" />
        <line x1="0" y1="833" x2="3456" y2="833" stroke="#0e1015" strokeWidth="9" />
        <line x1="0" y1="833" x2="3456" y2="833" stroke="#c3c6cc" strokeWidth="5" />

        <path d="M642 835 A604 604 0 0 0 1061 1610 Z" stroke="#d2d5d9" strokeWidth="4" />
        <path d="M642 835 L742 780 M1061 1610 L1161 1552" stroke="#d2d5d9" strokeWidth="4" />
        <path d="M732 786 L1150 1561" stroke="#d2d5d9" strokeWidth="4" />
        <polygon points="732,786 750,802 740,808" fill="#e6e8ea" />
        <polygon points="1150,1561 1132,1545 1142,1539" fill="#e6e8ea" />
        <text x="952" y="1170" fill="#d2d5d9" fontSize="32" textAnchor="middle" transform="rotate(62 952 1170)" fontFamily="'Liberation Sans', sans-serif">
          100
        </text>

        <path d="M1470 772 A635 635 0 1 0 2728 895" stroke="#d6d9dd" strokeWidth="4" />
        <path d="M2094 895 H2695" stroke="#b9bcc2" strokeWidth="4" strokeDasharray="3 5" />
        <path d="M2711 835 L2094 895" stroke="#a89c62" strokeWidth="5" strokeDasharray="50 28" />

        <line x1="2728" y1="540" x2="2728" y2="1908" stroke="#dfe2e6" strokeWidth="4" />

        <path d="M6 1741 V1883 H150" stroke="#c5c8ce" strokeWidth="4" />
        <text x="14" y="1724" fill="#c5c8ce" fontSize="46" fontFamily="'DejaVu Sans', sans-serif" fontWeight="200">Y</text>
        <text x="165" y="1877" fill="#c5c8ce" fontSize="46" fontFamily="'DejaVu Sans', sans-serif" fontWeight="200">X</text>
        <Logo />
      </svg>

      <div className="absolute left-0 top-[15px] text-[38px] leading-[44px] text-[#e2e4e8] [text-shadow:0_0_2px_#000]">-][俯视][二维线框]</div>

      <div className="absolute left-[2696px] top-[325px] flex h-[60px] w-[73px] items-start border-2 border-black bg-white pl-[8px] pt-[3px]">
        <div className="flex h-[47px] w-[17px] items-center justify-center bg-[#1565c0]">
          <div className="h-[12px] w-[10px] rounded-full border-[3px] border-white" />
        </div>
        <div className="ml-[2px] mt-[12px] h-[8px] w-[8px] rounded-full border-2 border-[#e07a6a]" />
      </div>
      <div className="absolute left-[2775px] top-[343px] flex h-[66px] w-[700px] items-center border-2 border-[#0d0f13] bg-[#b0b0ae] pb-[4px] pl-[9px] text-[34px] text-[#1f1f1f]">
        指定圆弧的端点(按住 Ctrl 键以切换方向)或
      </div>
    </div>
  )
}

const Zh = ({ children }: { children: ReactNode }) => (
  <span className="inline-block text-[37px] leading-[44px] [font-family:'Noto_Sans_CJK_SC',sans-serif]">{children}</span>
)

function CommandLine() {
  return (
    <div className="flex h-[165px] [font-family:'DejaVu_Sans_Mono',monospace]">
      <div className="flex w-[50px] flex-col items-center bg-[#2c3240]">
        <div className="mt-[6px] h-[22px] w-[46px] bg-[repeating-linear-gradient(90deg,#d6d9de_0_4px,transparent_4px_7px)]" />
        <Svg w={28} h={28} className="mt-[14px]">
          <path d="M3 3 L25 25 M25 3 L3 25" stroke="#d6d9de" strokeWidth="4" />
        </Svg>
        <FaWrench size={46} color="#d6d9de" className="-ml-[14px] mt-[22px] -scale-x-100" />
      </div>
      <div className="flex flex-1 flex-col bg-[#15181f]">
        <div className="flex h-[106px] flex-col bg-[#c9c9c9] pl-[8px] pt-[12px] text-[33px] text-[#222]">
          <div className="flex h-[44px] items-center">
            <Zh>指定圆弧的圆心</Zh>:
          </div>
          <div className="flex h-[44px] items-center">
            <Zh>指定圆弧的起点</Zh>:
          </div>
        </div>
        <div className="mt-[3px] flex h-[56px] items-center whitespace-pre bg-white text-[33px] text-[#111]">
          <Svg w={52} h={52} className="ml-[18px]">
            <path d="M3 48 Q8 16 44 4" stroke="#9fb7cc" strokeWidth="2.5" strokeDasharray="3 6" />
          </Svg>
          <Caret big fill="#5a5f68" className="mr-[14px]" />
          <span>ARC</span>
          <span className="ml-[14px]">
            <Zh>指定圆弧的端点</Zh>
          </span>
          <span>(</span>
          <Zh>按住</Zh>
          <span> Ctrl </span>
          <Zh>键以切换方向</Zh>
          <span>)</span>
          <Zh>或</Zh>
          <span> [</span>
          <span className="flex h-[46px] items-center rounded-[4px] bg-[#d0d0d0] px-[2px]">
            <Zh>角度</Zh>(<span className="text-[#2f3fc0]">A</span>)
          </span>
          <span className="ml-[13px] flex h-[46px] items-center rounded-[4px] bg-[#d0d0d0] px-[2px]">
            <Zh>弦长</Zh>(<span className="text-[#2f3fc0]">L</span>)
          </span>
          <span>]:</span>
        </div>
      </div>
    </div>
  )
}

function StatusBar() {
  const sep = "w-[8px] h-full bg-[#232936]"
  const on = "bg-[#5b93c8]"
  return (
    <div className="flex h-[76px] bg-[#1f2532]">
      <div className="flex h-[52px] items-center pl-[15px] text-[34px] font-medium text-[#a9aeb8]">
        <div className="flex h-full w-[126px] items-center justify-center rounded-b-[16px] bg-[#2d3342] text-[#f0f1f3]">模型</div>
        <div className="ml-[14px] flex h-full w-[136px] items-center justify-center rounded-b-[16px] bg-[#2a303e]">布局1</div>
        <div className="ml-[20px] flex h-full w-[130px] items-center justify-center rounded-b-[16px] bg-[#2a303e]">布局2</div>
        <div className="ml-[28px] flex h-full w-[62px] items-center justify-center rounded-b-[12px] bg-[#2a303e]">
          <Svg w={26} h={26}>
            <path d="M13 2 V24 M2 13 H24" stroke="#c4c8cf" strokeWidth="5" />
          </Svg>
        </div>
      </div>
      <div className="ml-auto mt-[7px] flex w-[1132px] items-stretch bg-[#3b4252]">
        <div className="flex w-[80px] items-center justify-center text-[34px] font-medium text-[#e4e6ea]">模型</div>
        <div className={sep} />
        <Slot className={`w-[64px] ${on}`}>
          <Svg w={46} h={50}>
            <path d="M12 2 V48 M24 2 V48 M36 2 V48 M2 12 H44 M2 24 H44 M2 36 H44" stroke="#eaf4ff" strokeWidth="3.5" />
          </Svg>
        </Slot>
        <Slot className="w-[72px]">
          <Svg w={40} h={50} className="ml-[1px]">
            {[6, 20, 34].map((x) =>
              [6, 18, 30, 42].map((y) => <rect key={`${x}${y}`} x={x - 3} y={y - 3} width="6" height="6" fill="#e4e6ea" />),
            )}
          </Svg>
        </Slot>
        <Slot className="w-[45px]">
          <Caret big />
        </Slot>
        <div className={sep} />
        <Slot className="w-[60px]">
          <Svg w={50} h={56}>
            <path d="M6 2 V52 H48" stroke="#c7cbd1" strokeWidth="3.5" />
            <rect x="6" y="32" width="20" height="20" stroke="#c7cbd1" strokeWidth="3" />
          </Svg>
        </Slot>
        <Slot className="w-[76px]">
          <Svg w={56} h={56}>
            <circle cx="24" cy="30" r="20" stroke="#b0b5bd" strokeWidth="3.5" />
            <path d="M24 30 L48 6 M24 30 H50" stroke="#b0b5bd" strokeWidth="3.5" />
          </Svg>
        </Slot>
        <Slot className="w-[42px]">
          <Caret big />
        </Slot>
        <Slot className="w-[70px]">
          <Svg w={40} h={60}>
            <path d="M12 2 L30 54" stroke="#c7655a" strokeWidth="3" />
            <path d="M22 2 V54" stroke="#78b088" strokeWidth="3" />
            <circle cx="22" cy="30" r="4" stroke="#e4e6ea" strokeWidth="2.5" />
          </Svg>
        </Slot>
        <Slot className="w-[44px]">
          <Caret big />
        </Slot>
        <Slot className={`w-[65px] ${on}`}>
          <Svg w={46} h={56}>
            <path d="M40 6 L6 50 H44" stroke="#eaf4ff" strokeWidth="3.5" />
          </Svg>
        </Slot>
        <Slot className={`ml-[4px] w-[65px] ${on}`}>
          <Svg w={52} h={56}>
            <path d="M10 16 V50 H46 V8 H16" stroke="#eaf4ff" strokeWidth="3.5" />
            <rect x="6" y="4" width="10" height="12" stroke="#eaf4ff" strokeWidth="3" />
          </Svg>
        </Slot>
        <Slot className="w-[40px]">
          <Caret big />
        </Slot>
        <div className={sep} />
        <Slot className={`w-[64px] ${on}`}>
          <Svg w={44} h={58}>
            <path d="M2 56 L14 10 L18 26 L26 56 L14 44 Z" fill="#eaf4ff" />
            <circle cx="32" cy="12" r="7" stroke="#eaf4ff" strokeWidth="3" />
          </Svg>
        </Slot>
        <Slot className="w-[63px]">
          <Svg w={46} h={58}>
            <path d="M4 56 L16 14 L20 28 L28 56 L16 44 Z" fill="#e4e6ea" />
            <path d="M28 10 L34 2 L32 14 L42 10 L36 20" fill="#e4e6ea" />
          </Svg>
        </Slot>
        <Slot className="w-[64px]">
          <Svg w={40} h={58}>
            <path d="M2 56 L18 10 L24 26 L36 56 L18 44 Z" fill="#e4e6ea" />
          </Svg>
        </Slot>
        <div className="flex w-[72px] items-center justify-end text-[30px] text-[#e4e6ea]">1:1</div>
        <Slot className="w-[40px]">
          <Caret big />
        </Slot>
        <div className={sep} />
        <Slot className="flex-1">
          <FaCog size={52} color="#e4e6ea" />
        </Slot>
      </div>
    </div>
  )
}

export default function App() {
  return (
    <div className="flex h-[2160px] w-[3456px] flex-col overflow-hidden bg-[#1f2532] [font-family:'Liberation_Sans','Noto_Sans_CJK_SC',sans-serif]">
      <div className="flex h-[115px]">
        <div className="relative h-[102px] w-[95px] shrink-0 bg-gradient-to-b from-[#c2c2c2] to-[#8c8c8c] shadow-[2px_2px_4px_#000]">
          <svg width="64" height="74" viewBox="0 0 64 74" className="absolute left-0 top-0">
            <path d="M-6 70 L22 0 H40 L60 70 H46 L41 50 H16 L8 70 Z M20 38 H37 L30 12 Z" fill="#c8322b" fillRule="evenodd" />
          </svg>
          <Caret className="absolute bottom-[50px] left-[73px]" />
        </div>
        <div className="flex-1">
          <TitleBar />
          <div className="flex h-[45px] items-start pl-[42px] text-[33px] font-medium leading-[34px] text-[#b7bcc6] [text-shadow:0_0_2px_#000]">
            {menus.map((m) => (
              <span key={m.label} className={m.w}>
                {m.label}
              </span>
            ))}
          </div>
        </div>
      </div>
      <RibbonTabs />
      <Ribbon />
      <DocTabs />
      <div className="h-[12px] bg-[#3b4252]" />
      <Canvas />
      <div className="h-[11px] bg-[#333a49]" />
      <CommandLine />
      <StatusBar />
    </div>
  )
}
